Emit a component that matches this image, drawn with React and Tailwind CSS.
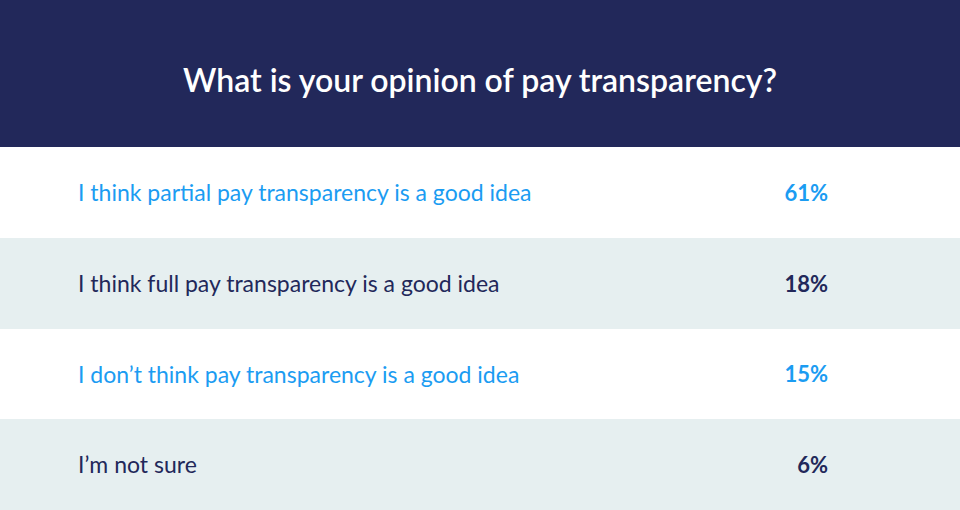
export default function App() {
  const rows = [
    { label: "I think partial pay transparency is a good idea", value: "61%", bg: "bg-white", color: "text-[#1b9cf2]" },
    { label: "I think full pay transparency is a good idea", value: "18%", bg: "bg-[#e6eff0]", color: "text-[#22285a]" },
    { label: "I don\u2019t think pay transparency is a good idea", value: "15%", bg: "bg-white", color: "text-[#1b9cf2]" },
    { label: "I\u2019m not sure", value: "6%", bg: "bg-[#e6eff0]", color: "text-[#22285a]" },
  ];
  return (
    <div className="w-[960px] h-[510px] flex flex-col font-['Lato',sans-serif] overflow-hidden">
      <div className="h-[147px] bg-[#22285a] flex items-center justify-center">
        <h1 className="text-white text-[32px] font-semibold pt-[12px]">What is your opinion of pay transparency?</h1>
      </div>
      {rows.map((r, i) => (
        <div key={i} className={`flex-1 flex items-center justify-between pl-[78px] pr-[132px] ${r.bg} ${r.color}`}>
          <span className="text-[23px]">{r.label}</span>
          <span className="text-[22px] font-bold">{r.value}</span>
        </div>
      ))}
    </div>
  );
}
